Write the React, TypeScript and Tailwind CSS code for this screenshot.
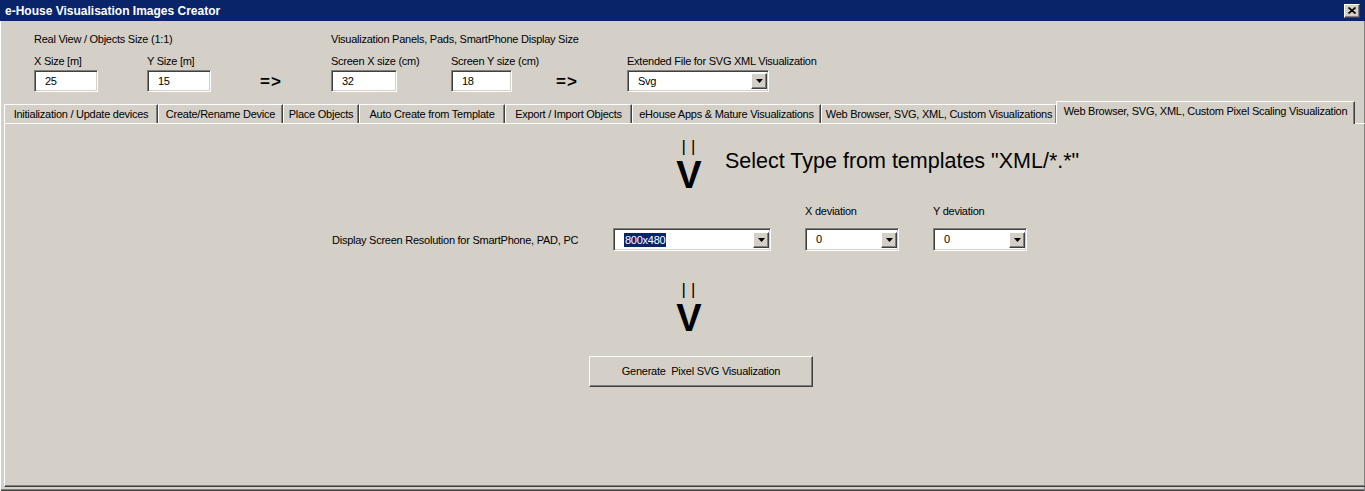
import type { ReactNode } from 'react';

const SUNKEN =
  'border border-t-[#808080] border-l-[#808080] border-b-white border-r-white shadow-[inset_1px_1px_0_#404040,inset_-1px_-1px_0_#d4d0c8]';
const RAISED =
  'border border-t-white border-l-white border-b-[#404040] border-r-[#404040] shadow-[inset_-1px_-1px_0_#808080,inset_1px_1px_0_#d4d0c8]';

const TABS: { label: string; w: number }[] = [
  { label: 'Initialization / Update devices', w: 154 },
  { label: 'Create/Rename Device', w: 125 },
  { label: 'Place Objects', w: 76 },
  { label: 'Auto Create from Template', w: 146 },
  { label: 'Export / Import Objects', w: 127 },
  { label: 'eHouse Apps & Mature Visualizations', w: 189 },
  { label: 'Web Browser, SVG, XML, Custom Visualizations', w: 236 },
];

function TextBox({ value, w }: { value: string; w: number }) {
  return (
    <div className={`h-[22px] bg-white flex items-center pl-[10px] ${SUNKEN}`} style={{ width: w }}>
      {value}
    </div>
  );
}

function DropArrow() {
  return (
    <div className={`w-[16px] h-[16px] mr-[1px] bg-[#d4d0c8] flex items-center justify-center ${RAISED}`}>
      <svg width="7" height="4" viewBox="0 0 7 4">
        <path d="M0 0h7L3.5 4z" fill="#000" />
      </svg>
    </div>
  );
}

function Combo({ value, w, h = 22, selected = false }: { value: string; w: number; h?: number; selected?: boolean }) {
  return (
    <div className={`bg-white flex items-center justify-between ${SUNKEN}`} style={{ width: w, height: h }}>
      {selected ? (
        <span className="ml-[10px] bg-[#0a246a] text-white px-[1px] leading-[14px]">{value}</span>
      ) : (
        <span className="ml-[10px]">{value}</span>
      )}
      <DropArrow />
    </div>
  );
}

function Field({ label, labelH = 16, children }: { label: string; labelH?: number; children: ReactNode }) {
  return (
    <div className="flex flex-col">
      <div className="leading-[14px]" style={{ height: labelH }}>{label}</div>
      {children}
    </div>
  );
}

function Arrow() {
  return (
    <div className="w-[30px] h-[52px] flex flex-col items-center tracking-normal">
      <div className="text-[17px] leading-[17px] h-[17px] tracking-[5px] pl-[4px]">||</div>
      <div className="text-[38px] leading-[28px] h-[28px] font-bold mt-[6px]">V</div>
    </div>
  );
}

function Implies() {
  return <div className="text-[17px] font-bold leading-[22px] tracking-[1px]">=&gt;</div>;
}

export default function App() {
  return (
    <div className="w-[1365px] h-[491px] bg-[#d4d0c8] text-black text-[11px] tracking-[-0.25px] font-['Liberation_Sans',Arial,sans-serif] flex flex-col overflow-hidden">
      {/* title bar */}
      <div className="h-[21px] bg-[#0a246a] flex items-center justify-between pl-[5px] pr-[5px] shrink-0 tracking-normal">
        <span className="text-white font-bold text-[12px]">e-House Visualisation Images Creator</span>
        <div className={`w-[16px] h-[14px] bg-[#d4d0c8] flex items-center justify-center ${RAISED}`}>
          <svg width="8" height="7" viewBox="0 0 8 7">
            <path d="M0.5 0.5L7.5 6.5M7.5 0.5L0.5 6.5" stroke="#000" strokeWidth="1.6" />
          </svg>
        </div>
      </div>

      <div className="flex-1 flex flex-col shadow-[inset_1px_0_0_#fff,inset_-1px_0_0_#808080,inset_0_-1px_0_#404040,inset_0_-2px_0_#808080] pb-[4px]">
        {/* top fields */}
        <div className="flex pl-[34px] pt-[10px] h-[33px] shrink-0">
          <div className="w-[297px]">Real View / Objects Size (1:1)</div>
          <div>Visualization Panels, Pads, SmartPhone Display Size</div>
        </div>
        <div className="flex items-end pl-[34px]">
          <div className="w-[113px]"><Field label="X Size [m]"><TextBox value="25" w={64} /></Field></div>
          <div className="w-[113px]"><Field label="Y Size [m]"><TextBox value="15" w={64} /></Field></div>
          <div className="w-[71px] mb-[-1px]"><Implies /></div>
          <div className="w-[120px]"><Field label="Screen X size (cm)"><TextBox value="32" w={66} /></Field></div>
          <div className="w-[105px]"><Field label="Screen Y size (cm)"><TextBox value="18" w={61} /></Field></div>
          <div className="w-[71px] mb-[-1px]"><Implies /></div>
          <Field label="Extended File for SVG XML Visualization"><Combo value="Svg" w={142} /></Field>
        </div>

        {/* tabs */}
        <div className="flex items-end pl-[4px] mt-[8px] h-[23px] shrink-0 relative z-10">
          {TABS.map((t) => (
            <div
              key={t.label}
              className="h-[19px] flex items-center justify-center whitespace-nowrap border-t border-l border-t-white border-l-white border-r border-r-[#404040] shadow-[inset_-1px_0_0_#808080]"
              style={{ width: t.w }}
            >
              {t.label}
            </div>
          ))}
          <div className="h-[23px] w-[299px] -ml-[1px] pb-[3px] flex items-center justify-center whitespace-nowrap bg-[#d4d0c8] border-t border-l border-t-white border-l-white border-r border-r-[#404040] shadow-[inset_-1px_0_0_#808080] -mb-[1px]">
            Web Browser, SVG, XML, Custom Pixel Scaling Visualization
          </div>
        </div>

        {/* tab page */}
        <div className="flex-1 ml-[4px] border-t border-l border-t-white border-l-white border-b border-b-[#404040] shadow-[inset_0_-1px_0_#808080] flex flex-col">
          <div className="flex items-start mt-[14px]">
            <div className="ml-[669px]"><Arrow /></div>
            <div className="ml-[21px] mt-[10px] text-[21.5px] leading-[26px] whitespace-nowrap tracking-normal">
              Select Type from templates "XML/*.*"
            </div>
          </div>

          <div className="flex items-end mt-[14px]">
            <div className="ml-[327px] w-[281px] mb-[3px]">Display Screen Resolution for SmartPhone, PAD, PC</div>
            <Combo value="800x480" w={158} h={23} selected />
            <div className="ml-[34px]"><Field label="X deviation" labelH={24}><Combo value="0" w={94} h={23} /></Field></div>
            <div className="ml-[34px]"><Field label="Y deviation" labelH={24}><Combo value="0" w={94} h={23} /></Field></div>
          </div>

          <div className="mt-[30px] ml-[669px]"><Arrow /></div>

          <div className="mt-[23px] ml-[584px]">
            <button className={`w-[224px] h-[31px] bg-[#d4d0c8] text-[11px] tracking-[-0.25px] ${RAISED}`}>
              Generate&nbsp; Pixel SVG Visualization
            </button>
          </div>
        </div>
      </div>
    </div>
  );
}
